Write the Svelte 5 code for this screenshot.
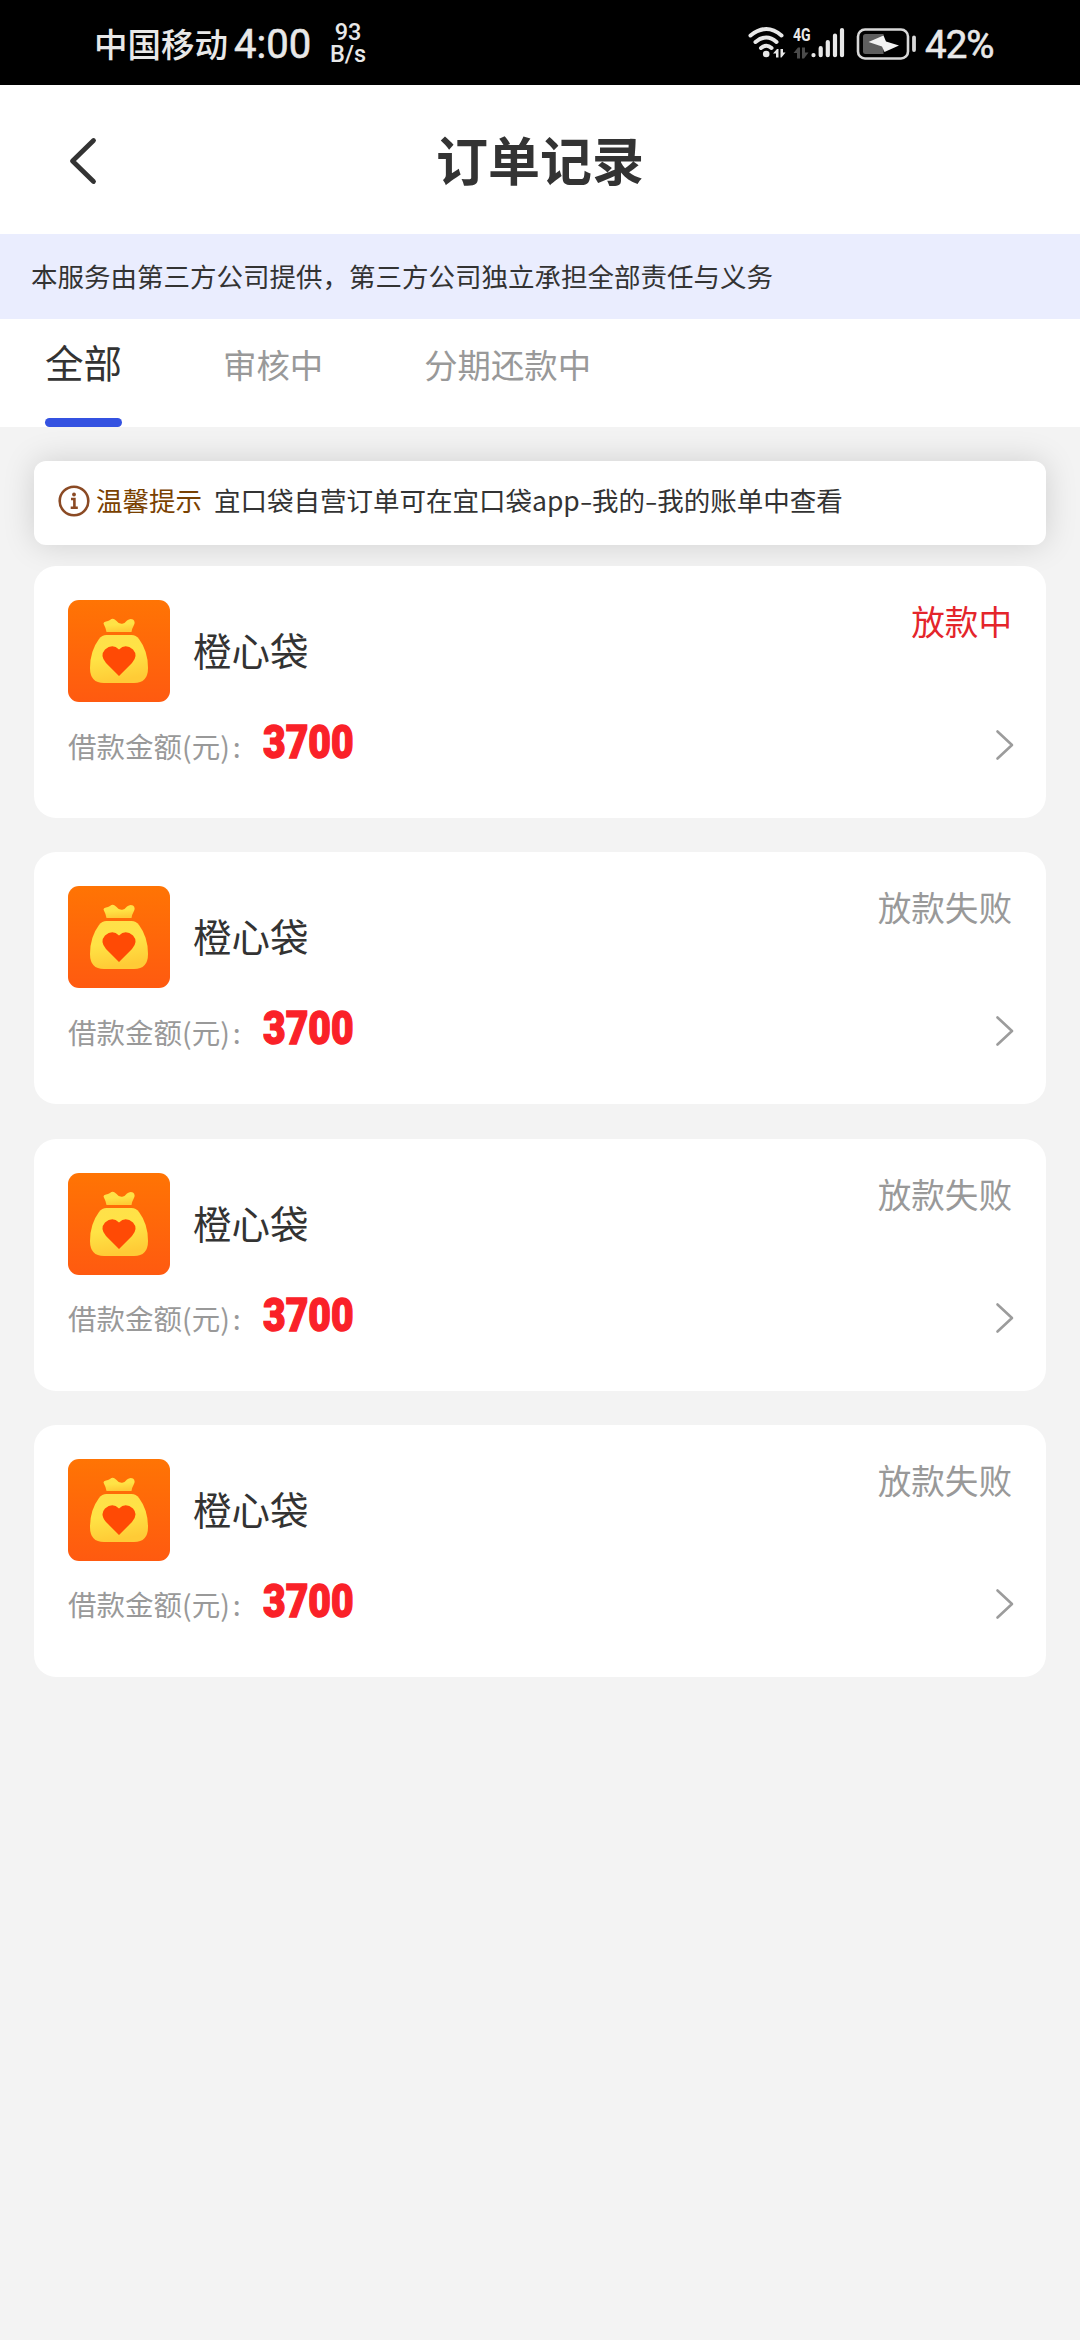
<script>
  const tabs = ['全部', '审核中', '分期还款中'];
  let active = $state(0);

  const orders = [
    { name: '橙心袋', amount: '3700', status: '放款中', pending: true },
    { name: '橙心袋', amount: '3700', status: '放款失败', pending: false },
    { name: '橙心袋', amount: '3700', status: '放款失败', pending: false },
    { name: '橙心袋', amount: '3700', status: '放款失败', pending: false }
  ];
</script>

<div class="page">
  <div class="statusbar">
    <span class="carrier">中国移动</span>
    <span class="clock">4:00</span>
    <span class="speed"><span>93</span><span>B/s</span></span>
    <span class="spacer"></span>
    <svg class="wifi" width="38" height="34" viewBox="0 0 38 34">
      <g fill="none" stroke="#e8e8e8" stroke-width="4" stroke-linecap="round">
        <path d="M2.500 9.500Q18.500 -3.500 33.500 9.500" />
        <path d="M7.500 16Q18.500 7 28.500 16" />
        <path d="M13 22Q18.500 17.600 23.500 22" />
      </g>
      <circle cx="18.200" cy="28" r="3.300" fill="#e8e8e8" />
      <path d="M25 27.500L29 23H30.500V31.500H28V27.500ZM32.500 23H35V26.500H37.500L33.500 31.500H32.500Z" fill="#e8e8e8" />
    </svg>
    <div class="cell">
      <div class="net">
        <span>4G</span>
        <svg width="16" height="12" viewBox="0 0 16 12">
          <path d="M0.500 6L5 0.500H7V11.500H4V6ZM9 0.500H12V5.500H15.500L11 11.500H9Z" fill="#4a4a4a" />
        </svg>
      </div>
      <svg width="34" height="32" viewBox="0 0 34 32">
        <g stroke="#e8e8e8" stroke-width="4.200" stroke-linecap="round">
          <path d="M2.500 28V28.200M9.700 21.200V28.200M16.800 15V28.200M24 8.500V28.200M31 3V28.200" />
        </g>
      </svg>
    </div>
    <svg class="battery" width="62" height="34" viewBox="0 0 62 34">
      <rect x="3" y="2.500" width="50" height="29" rx="7" fill="none" stroke="#d8d8d8" stroke-width="2.600" />
      <path d="M10.500 7H28.500V27H10.500Q8 27 8 24.500V9.500Q8 7 10.500 7Z" fill="#5e5e5e" />
      <path d="M13.500 15L28.500 8.500L31 14.500L44 18.500L29.500 25L27 19.500Z" fill="#f2f2f2" />
      <path d="M59 10.500V23" stroke="#d8d8d8" stroke-width="3.800" stroke-linecap="round" />
    </svg>
    <span class="percent">42%</span>
  </div>

  <header class="header">
    <svg class="back" width="30" height="48" viewBox="0 0 30 48">
      <path d="M25.500 3.500L4.500 24L25.500 44.500" fill="none" stroke="#333" stroke-width="4.800" stroke-linecap="round" stroke-linejoin="round" />
    </svg>
    <h1>订单记录</h1>
  </header>

  <div class="notice">本服务由第三方公司提供，第三方公司独立承担全部责任与义务</div>

  <nav class="tabs">
    {#each tabs as tab, i}
      <button class="tab" class:active={active === i} onclick={() => (active = i)}>{tab}</button>
    {/each}
  </nav>

  <main>
    <div class="tip">
      <svg width="32" height="32" viewBox="0 0 32 32">
        <circle cx="16" cy="16" r="14.300" fill="none" stroke="#8b4a24" stroke-width="2.600" />
        <circle cx="16" cy="9.500" r="1.900" fill="#8b4a24" />
        <path d="M13 14H16.400V22.500M12.700 22.800H19.800" fill="none" stroke="#8b4a24" stroke-width="2.600" />
      </svg>
      <span class="tip-title">温馨提示</span>
      <span class="tip-text">宜口袋自营订单可在宜口袋<span class="latin">app</span><span class="dash">-</span>我的<span class="dash">-</span>我的账单中查看</span>
    </div>

    <div class="orders">
      {#each orders as order}
        <section class="card">
          <div class="top">
            <svg class="logo" width="102" height="102" viewBox="0 0 102 102">
              <defs>
                <linearGradient id="tile" x1="0" y1="0" x2="0" y2="1">
                  <stop offset="0" stop-color="#ff7404" />
                  <stop offset="1" stop-color="#ff5a10" />
                </linearGradient>
                <linearGradient id="bag" x1="0" y1="0" x2="0.200" y2="1">
                  <stop offset="0" stop-color="#ffe04a" />
                  <stop offset="0.500" stop-color="#ffe345" />
                  <stop offset="1" stop-color="#ffcb36" />
                </linearGradient>
              </defs>
              <rect width="102" height="102" rx="11" fill="url(#tile)" />
              <path d="M38.500 32Q38 28.500 35.500 23.500Q35.500 22 38 21.500Q40 21.300 42 20Q45 17.500 48 20.500Q51 24.500 55 23.500Q57 23 59 20.500Q62 18 65 19.500Q68 22 65.500 26Q64 28.500 63.500 32Z" fill="url(#bag)" />
              <path d="M38.500 35H63.500Q68 35 71 39Q80 51 80 68Q80 83 66 83H36Q22 83 22 68Q22 51 31 39Q34 35 38.500 35Z" fill="url(#bag)" />
              <path d="M51 76L38 63Q31.500 55.500 37 49.500Q44.500 43 51 49.500Q57.500 43 65 49.500Q70.500 55.500 64 63Z" fill="#ff4a05" />
            </svg>
            <span class="name">{order.name}</span>
            <span class="state" class:pending={order.pending}>{order.status}</span>
          </div>
          <div class="bottom">
            <span class="label">借款金额(元)<span class="colon">:</span></span>
            <span class="amount">{order.amount}</span>
            <svg class="go" width="20" height="32" viewBox="0 0 20 32">
              <path d="M2.500 2.500L17 16L2.500 29.500" fill="none" stroke="#9c9c9c" stroke-width="2.600" stroke-linecap="round" stroke-linejoin="round" />
            </svg>
          </div>
        </section>
      {/each}
    </div>
  </main>
</div>

<style>
  :global(body) {
    background: #f3f3f3;
  }

  .page {
    width: 1080px;
    min-height: 2340px;
    background: #f3f3f3;
    color: #333;
    font-family: 'Noto Sans CJK SC', sans-serif;
    overflow: hidden;
  }

  .statusbar {
    display: flex;
    align-items: center;
    box-sizing: border-box;
    height: 85px;
    padding: 0 86px 0 94px;
    background: #000;
    color: #e8e8e8;
    white-space: nowrap;
  }

  .carrier {
    font-size: 33.500px;
    font-weight: 500;
    line-height: 40px;
  }

  .clock,
  .percent {
    font-family: Roboto, sans-serif;
    font-weight: 400;
    -webkit-text-stroke: 0.600px #e8e8e8;
    font-size: 40px;
    line-height: 44px;
    padding-top: 4px;
  }

  .clock {
    margin-left: 6px;
    width: 76px;
  }

  .speed {
    display: flex;
    flex-direction: column;
    align-items: center;
    margin-left: 20px;
    padding-top: 2px;
    font-family: Roboto, sans-serif;
    font-size: 23.500px;
    font-weight: 500;
    line-height: 21.500px;
  }

  .spacer {
    flex: 1;
  }

  .cell {
    display: flex;
    align-items: flex-end;
    margin-left: 7px;
    gap: 1px;
  }

  .net {
    display: flex;
    flex-direction: column;
    width: 17px;
    height: 32px;
    justify-content: space-between;
    font-family: Roboto, sans-serif;
    font-weight: 700;
    font-size: 18px;
    line-height: 16px;
  }

  .net span {
    transform: scaleX(0.780);
    transform-origin: left;
  }

  .battery {
    margin-left: 10px;
    margin-top: 3px;
  }

  .percent {
    margin-left: 8px;
    width: 69px;
    font-size: 38.500px;
    letter-spacing: -1px;
  }

  .header {
    display: grid;
    grid-template-columns: 30px 1fr 30px;
    align-items: center;
    box-sizing: border-box;
    height: 149px;
    padding: 2px 68px 0;
    background: #fff;
  }

  h1 {
    margin: -4px 0 0;
    text-align: center;
    font-size: 52px;
    line-height: 60px;
    font-weight: 700;
  }

  .notice {
    height: 85px;
    padding-left: 31px;
    background: #eaedfe;
    font-size: 26.500px;
    line-height: 83px;
    white-space: nowrap;
  }

  .tabs {
    position: relative;
    z-index: 1;
    display: flex;
    height: 108px;
    padding-left: 45px;
    background: #fff;
  }

  .tab {
    display: flex;
    flex-direction: column;
    justify-content: space-between;
    margin: 0 101px 0 0;
    padding: 0;
    border: 0;
    background: none;
    color: #999;
    font-family: inherit;
    font-size: 33.400px;
    line-height: 90px;
    white-space: nowrap;
  }

  .tab.active {
    color: #333;
    font-size: 38.500px;
    line-height: 85px;
  }

  .tab.active::after {
    content: '';
    width: 77px;
    height: 9px;
    border-radius: 5px;
    background: #3452e1;
  }

  main {
    padding: 34px 34px 0;
  }

  .tip {
    display: flex;
    align-items: center;
    box-sizing: border-box;
    height: 84px;
    padding: 0 24px 4px;
    border-radius: 12px;
    background: #fff;
    box-shadow: 0 0 32px rgba(0, 0, 0, 0.150);
    font-size: 26.500px;
    white-space: nowrap;
  }

  .tip-title {
    margin: -3px 0 0 6px;
    color: #7a4100;
  }

  .tip-text {
    margin: -3px 0 0 12px;
  }

  .dash {
    display: inline-block;
    padding: 0 1.500px;
    transform: scaleX(1.400);
  }

  .orders {
    position: relative;
    display: flex;
    flex-direction: column;
    gap: 34.300px;
    margin-top: 21px;
  }

  .card {
    box-sizing: border-box;
    height: 252px;
    padding: 34px;
    border-radius: 22px;
    background: #fff;
  }

  .top {
    display: flex;
    align-items: center;
    height: 102px;
  }

  .name {
    flex: 1;
    margin: -4px 0 0 23px;
    font-size: 38.500px;
    line-height: 46px;
  }

  .state {
    align-self: flex-start;
    color: #999;
    font-size: 33.600px;
    line-height: 42px;
  }

  .state.pending {
    color: #e4252b;
  }

  .bottom {
    display: flex;
    align-items: center;
    height: 86px;
  }

  .label {
    width: 195px;
    color: #999;
    font-size: 28.500px;
    line-height: 40px;
    padding-top: 1px;
  }

  .colon {
    margin-left: 3px;
  }

  .amount {
    flex: 1;
    margin-bottom: 6px;
    color: #fa2128;
    font-family: Roboto, sans-serif;
    font-size: 46.500px;
    font-weight: 900;
    line-height: 50px;
    -webkit-text-stroke: 1.400px #fa2128;
    transform: scaleX(0.840);
    transform-origin: left;
  }

  .go {
    margin-right: -3px;
  }
</style>
